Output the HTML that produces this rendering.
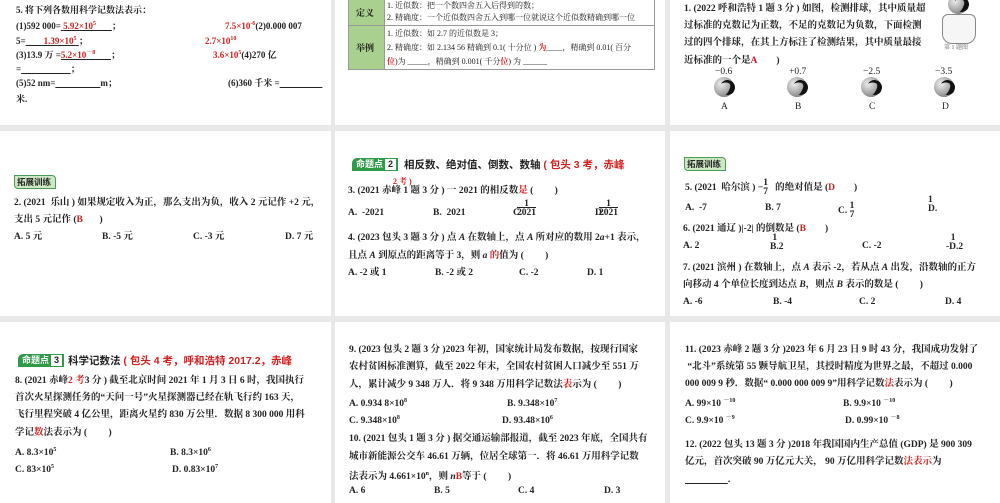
<!DOCTYPE html>
<html><head><meta charset="utf-8"><style>
body{margin:0;width:1000px;height:503px;background:#e8e8e8;position:relative;overflow:hidden;font-family:"Liberation Serif","Noto Serif CJK SC",serif;font-weight:bold;font-size:9.5px;color:#222}
.p{position:absolute;background:#fff}
.t{position:absolute;white-space:nowrap;line-height:12px}
.s9{font-size:9px}
.r{color:#d42020;font-weight:bold}
.sm{font-size:6px;vertical-align:super}
.bd{position:absolute;height:13px;background:#2f9a48;color:#fff;font-size:9px;line-height:13px;padding:0 2px 0 4px;border-radius:5px 0 0 0;font-family:"Liberation Sans","Noto Sans CJK SC",sans-serif}
.bd i{font-style:normal;display:inline-block;background:#fff;color:#222;width:11px;text-align:center;margin-left:2px;line-height:11px}
.tz{position:absolute;height:12px;background:#cfe8c4;border:1px solid #4b9a55;border-radius:0 4px 0 4px;font-size:8.5px;line-height:12px;padding:0 4px 0 2px;font-family:"Liberation Sans","Noto Sans CJK SC",sans-serif}
.ball{position:absolute;width:20px;height:20px;border-radius:50%;background:radial-gradient(circle at 35% 35%,#eee,#999 60%,#555)}
.ball:after{content:"";position:absolute;left:6px;top:3px;width:10px;height:12px;border-radius:50%;border-right:5px solid #111;border-top:3px solid #111;transform:rotate(20deg)}
.cell{position:absolute;font-size:8px;white-space:nowrap;font-weight:normal}
</style></head><body>
<div class="p" style="left:0;top:0;width:331px;height:125px"></div>
<div class="p" style="left:335px;top:0;width:330px;height:125px"></div>
<div class="p" style="left:670px;top:0;width:330px;height:125px"></div>
<div class="p" style="left:0;top:131px;width:331px;height:185px"></div>
<div class="p" style="left:335px;top:131px;width:330px;height:185px"></div>
<div class="p" style="left:670px;top:131px;width:330px;height:185px"></div>
<div class="p" style="left:0;top:322px;width:331px;height:181px"></div>
<div class="p" style="left:335px;top:322px;width:330px;height:181px"></div>
<div class="p" style="left:670px;top:322px;width:330px;height:181px"></div>

<!-- row1 col1 -->
<div class="t s9" style="left:16px;top:4px">5. 将下列各数用科学记数法表示：</div>
<div class="t s9" style="left:16px;top:18px">(1)592 000=<u>&nbsp;<span class="r">5.92×10<span class="sm">5</span></span>&nbsp;&nbsp;&nbsp;&nbsp;&nbsp;&nbsp;&nbsp;</u>；</div>
<div class="t s9" style="left:225px;top:18px"><span class="r">7.5×10<span class="sm">-6</span></span>(2)0.000 007</div>
<div class="t s9" style="left:16px;top:33px">5=<u>&nbsp;&nbsp;&nbsp;&nbsp;&nbsp;&nbsp;&nbsp;&nbsp;<span class="r">1.39×10<span class="sm">5</span></span>&nbsp;</u>；</div>
<div class="t s9" style="left:205px;top:33px"><span class="r">2.7×10<span class="sm">10</span></span></div>
<div class="t s9" style="left:16px;top:47px">(3)13.9 万 =<u><span class="r">5.2×10<span class="sm">－8</span></span>&nbsp;&nbsp;&nbsp;&nbsp;&nbsp;&nbsp;&nbsp;</u>；</div>
<div class="t s9" style="left:213px;top:47px"><span class="r">3.6×10<span class="sm">5</span></span>(4)270 亿</div>
<div class="t s9" style="left:16px;top:63px">=<u>&nbsp;&nbsp;&nbsp;&nbsp;&nbsp;&nbsp;&nbsp;&nbsp;&nbsp;&nbsp;&nbsp;&nbsp;&nbsp;&nbsp;&nbsp;&nbsp;&nbsp;&nbsp;&nbsp;&nbsp;&nbsp;&nbsp;</u>；</div>
<div class="t s9" style="left:16px;top:77px">(5)52 nm=<u>&nbsp;&nbsp;&nbsp;&nbsp;&nbsp;&nbsp;&nbsp;&nbsp;&nbsp;&nbsp;&nbsp;&nbsp;&nbsp;&nbsp;&nbsp;&nbsp;&nbsp;&nbsp;&nbsp;&nbsp;</u>m；</div>
<div class="t s9" style="left:228px;top:77px">(6)360 千米 =<u>&nbsp;&nbsp;&nbsp;&nbsp;&nbsp;&nbsp;&nbsp;&nbsp;&nbsp;&nbsp;&nbsp;&nbsp;&nbsp;&nbsp;&nbsp;&nbsp;&nbsp;&nbsp;&nbsp;</u></div>
<div class="t s9" style="left:16px;top:93px">米.</div>

<!-- row1 col2 table -->
<div style="position:absolute;left:348px;top:-2px;width:305px;height:70px;border:1px solid #999"></div>
<div style="position:absolute;left:349px;top:-1px;width:35px;height:70px;background:#a9d08e;border-right:1px solid #999"></div>
<div style="position:absolute;left:349px;top:25px;width:305px;height:1px;background:#999"></div>
<div class="t" style="left:356px;top:7px;font-size:9px">定义</div>
<div class="t" style="left:356px;top:42px;font-size:9px">举例</div>
<div class="cell" style="left:387px;top:0px;line-height:12px">1. 近似数：把一个数四舍五入后得到的数；<br>2. 精确度：一个近似数四舍五入到哪一位就说这个近似数精确到哪一位</div>
<div class="cell" style="left:387px;top:27px;line-height:14px">1. 近似数：如 2.7 的近似数是 3；<br>2. 精确度：如 2.134 56 精确到 0.1( 十分位 ) <span class="r">为</span>____，精确到 0.01( 百分<br><span class="r">位</span>)为 _____，精确到 0.001( 千分<span class="r">位</span>) 为 ______</div>

<!-- row1 col3 -->
<div class="t" style="left:684px;top:3px;font-size:9.5px">1. (2022 呼和浩特 1 题 3 分 ) 如图，检测排球，其中质量超</div>
<div class="t" style="left:684px;top:20px;font-size:9.5px">过标准的克数记为正数，不足的克数记为负数，下面检测</div>
<div class="t" style="left:684px;top:37px;font-size:9.5px">过的四个排球，在其上方标注了检测结果，其中质量最接</div>
<div class="t" style="left:684px;top:55px;font-size:9.5px">近标准的一个是<span class="r">A</span>&nbsp;&nbsp;&nbsp;&nbsp;&nbsp;&nbsp;&nbsp;&nbsp;)</div>
<div class="ball" style="left:948px;top:-6px"></div>
<div style="position:absolute;left:942px;top:14px;width:32px;height:28px;border:1px solid #888;border-radius:6px 6px 10px 10px;background:#f6f6f6"></div>
<div class="t" style="left:944px;top:42px;font-size:6px;color:#666;font-weight:normal">第 1 题图</div>
<div class="t" style="left:715px;top:66px;font-weight:normal">−0.6</div>
<div class="t" style="left:789px;top:66px;font-weight:normal">+0.7</div>
<div class="t" style="left:863px;top:66px;font-weight:normal">−2.5</div>
<div class="t" style="left:935px;top:66px;font-weight:normal">−3.5</div>
<div class="ball" style="left:714px;top:77px"></div>
<div class="ball" style="left:787px;top:77px"></div>
<div class="ball" style="left:861px;top:77px"></div>
<div class="ball" style="left:934px;top:77px"></div>
<div class="t" style="left:721px;top:101px;font-weight:normal">A</div>
<div class="t" style="left:795px;top:101px;font-weight:normal">B</div>
<div class="t" style="left:869px;top:101px;font-weight:normal">C</div>
<div class="t" style="left:942px;top:101px;font-weight:normal">D</div>

<!-- row2 col1 -->
<div class="tz" style="left:14px;top:175px">拓展训练</div>
<div class="t" style="left:14px;top:197px">2. (2021&nbsp; 乐山 ) 如果规定收入为正，那么支出为负，收入 2 元记作 +2 元，</div>
<div class="t" style="left:14px;top:214px">支出 5 元记作 (<span class="r">B</span>&nbsp;&nbsp;&nbsp;&nbsp;&nbsp;&nbsp;&nbsp;)</div>
<div class="t" style="left:14px;top:231px">A. 5 元</div>
<div class="t" style="left:102px;top:231px">B. -5 元</div>
<div class="t" style="left:193px;top:231px">C. -3 元</div>
<div class="t" style="left:285px;top:231px">D. 7 元</div>

<!-- row2 col2 -->
<div class="bd" style="left:352px;top:158px">命题点<i>2</i></div>
<div class="t" style="left:404px;top:159px;font-size:10.5px;font-family:'Liberation Sans','Noto Sans CJK SC',sans-serif">相反数、绝对值、倒数、数轴 <span class="r">( 包头 3 考，赤峰</span></div>
<div class="t r" style="left:393px;top:176px;font-size:8px">2 考 )</div>
<div class="t" style="left:348px;top:185px">3. (2021 赤峰 1 题 3 分 ) 一 2021 的相反数<span class="r">是</span> (&nbsp;&nbsp;&nbsp;&nbsp;&nbsp;&nbsp;&nbsp;&nbsp;&nbsp;)</div>
<div class="t" style="left:348px;top:207px">A.&nbsp; -2021</div>
<div class="t" style="left:433px;top:207px">B.&nbsp; 2021</div>
<div class="t" style="left:513px;top:207px">C.</div>
<div class="t" style="left:517px;top:200px;line-height:9px;text-align:center">1<br><span style="border-top:1px solid #222">2021</span></div>
<div class="t" style="left:595px;top:207px">D.</div>
<div class="t" style="left:599px;top:200px;line-height:9px;text-align:center">1<br><span style="border-top:1px solid #222">2021</span></div>
<div class="t" style="left:348px;top:232px">4. (2023 包头 3 题 3 分 ) 点 <i>A</i> 在数轴上，点 <i>A</i> 所对应的数用 2<i>a</i>+1 表示，</div>
<div class="t" style="left:348px;top:250px">且点 <i>A</i> 到原点的距离等于 3，则 <i>a</i> <span class="r">的</span>值为 (&nbsp;&nbsp;&nbsp;&nbsp;&nbsp;&nbsp;&nbsp;&nbsp;&nbsp;)</div>
<div class="t" style="left:348px;top:267px">A. -2 或 1</div>
<div class="t" style="left:435px;top:267px">B. -2 或 2</div>
<div class="t" style="left:519px;top:267px">C. -2</div>
<div class="t" style="left:587px;top:267px">D. 1</div>

<!-- row2 col3 -->
<div class="tz" style="left:684px;top:157px">拓展训练</div>
<div class="t" style="left:685px;top:179px">5. (2021&nbsp; 哈尔滨 ) −<span style="display:inline-block;vertical-align:middle;line-height:9px;text-align:center">1<br>7</span>&nbsp;&nbsp; 的绝对值是 (<span class="r">D</span>&nbsp;&nbsp;&nbsp;&nbsp;&nbsp;&nbsp;&nbsp;&nbsp;)</div>
<div class="t" style="left:685px;top:202px">A.&nbsp; -7</div>
<div class="t" style="left:765px;top:202px">B. 7</div>
<div class="t" style="left:838px;top:202px">C. <span style="display:inline-block;vertical-align:middle;line-height:9px">1<br>7</span></div>
<div class="t" style="left:928px;top:196px;line-height:9px">1<br>D.</div>
<div class="t" style="left:683px;top:223px">6. (2021 通辽 )|-2| 的倒数是 (<span class="r">B</span>&nbsp;&nbsp;&nbsp;&nbsp;&nbsp;&nbsp;&nbsp;&nbsp;)</div>
<div class="t" style="left:683px;top:240px">A. 2</div>
<div class="t" style="left:770px;top:234px;line-height:9px">&nbsp;1<br>B.2</div>
<div class="t" style="left:862px;top:240px">C. -2</div>
<div class="t" style="left:946px;top:234px;line-height:9px">&nbsp;&nbsp;1<br>-D.2</div>
<div class="t" style="left:683px;top:262px">7. (2021 滨州 ) 在数轴上，点 <i>A</i> 表示 -2，若从点 <i>A</i> 出发，沿数轴的正方</div>
<div class="t" style="left:683px;top:279px">向移动 4 个单位长度到达点 <i>B</i>，则点 <i>B</i> 表示的数是 (&nbsp;&nbsp;&nbsp;&nbsp;&nbsp;&nbsp;&nbsp;&nbsp;&nbsp;)</div>
<div class="t" style="left:683px;top:296px">A. -6</div>
<div class="t" style="left:773px;top:296px">B. -4</div>
<div class="t" style="left:859px;top:296px">C. 2</div>
<div class="t" style="left:945px;top:296px">D. 4</div>

<!-- row3 col1 -->
<div class="bd" style="left:18px;top:354px">命题点<i>3</i></div>
<div class="t" style="left:68px;top:355px;font-size:10.5px;font-family:'Liberation Sans','Noto Sans CJK SC',sans-serif">科学记数法 <span class="r">( 包头 4 考，呼和浩特 2017.2，赤峰</span></div>
<div class="t" style="left:15px;top:375px">8. (2021 赤峰<span class="r">2 考</span>3 分 ) 截至北京时间 2021 年 1 月 3 日 6 时，我国执行</div>
<div class="t" style="left:15px;top:392px">首次火星探测任务的“天问一号”火星探测器已经在轨飞行约 163 天，</div>
<div class="t" style="left:15px;top:409px">飞行里程突破 4 亿公里，距离火星约 830 万公里．数据 8 300 000 用科</div>
<div class="t" style="left:15px;top:427px">学记<span class="r">数</span>法表示为 (&nbsp;&nbsp;&nbsp;&nbsp;&nbsp;&nbsp;&nbsp;&nbsp;&nbsp;)</div>
<div class="t" style="left:15px;top:444px">A. 8.3×10<span class="sm">5</span></div>
<div class="t" style="left:170px;top:444px">B. 8.3×10<span class="sm">6</span></div>
<div class="t" style="left:15px;top:461px">C. 83×10<span class="sm">5</span></div>
<div class="t" style="left:172px;top:461px">D. 0.83×10<span class="sm">7</span></div>

<!-- row3 col2 -->
<div class="t" style="left:349px;top:344px">9. (2023 包头 2 题 3 分 )2023 年初，国家统计局发布数据，按现行国家</div>
<div class="t" style="left:349px;top:361px">农村贫困标准测算，截至 2022 年末，全国农村贫困人口减少至 551 万</div>
<div class="t" style="left:349px;top:379px">人，累计减少 9 348 万人．将 9 348 万用科学记数法<span class="r">表</span>示为 (&nbsp;&nbsp;&nbsp;&nbsp;&nbsp;&nbsp;&nbsp;&nbsp;&nbsp;)</div>
<div class="t" style="left:349px;top:395px">A. 0.934 8×10<span class="sm">8</span></div>
<div class="t" style="left:507px;top:395px">B. 9.348×10<span class="sm">7</span></div>
<div class="t" style="left:349px;top:412px">C. 9.348×10<span class="sm">8</span></div>
<div class="t" style="left:502px;top:412px">D. 93.48×10<span class="sm">6</span></div>
<div class="t" style="left:349px;top:433px">10. (2021 包头 1 题 3 分 ) 据交通运输部报道，截至 2023 年底，全国共有</div>
<div class="t" style="left:349px;top:451px">城市新能源公交车 46.61 万辆，位居全球第一．将 46.61 万用科学记数</div>
<div class="t" style="left:349px;top:468px">法表示为 4.661×10<span class="sm">n</span>，则 <i>n</i><span class="r">B</span>等于 (&nbsp;&nbsp;&nbsp;&nbsp;&nbsp;&nbsp;&nbsp;&nbsp;&nbsp;)</div>
<div class="t" style="left:349px;top:485px">A. 6</div>
<div class="t" style="left:434px;top:485px">B. 5</div>
<div class="t" style="left:518px;top:485px">C. 4</div>
<div class="t" style="left:604px;top:485px">D. 3</div>

<!-- row3 col3 -->
<div class="t" style="left:685px;top:344px">11. (2023 赤峰 2 题 3 分 )2023 年 6 月 23 日 9 时 43 分，我国成功发射了</div>
<div class="t" style="left:685px;top:361px">&nbsp;“北斗”系统第 55 颗导航卫星，其授时精度为世界之最，不超过 0.000</div>
<div class="t" style="left:685px;top:378px">000 009 9 秒．数据“ 0.000 000 009 9”用科学记数<span class="r">法</span>表示为 (&nbsp;&nbsp;&nbsp;&nbsp;&nbsp;&nbsp;&nbsp;&nbsp;&nbsp;)</div>
<div class="t" style="left:685px;top:395px">A. 99×10 <span class="sm">－10</span></div>
<div class="t" style="left:843px;top:395px">B. 9.9×10 <span class="sm">－10</span></div>
<div class="t" style="left:685px;top:412px">C. 9.9×10 <span class="sm">－9</span></div>
<div class="t" style="left:845px;top:412px">D. 0.99×10 <span class="sm">－8</span></div>
<div class="t" style="left:685px;top:439px">12. (2022 包头 13 题 3 分 )2018 年我国国内生产总值 (GDP) 是 900 309</div>
<div class="t" style="left:685px;top:456px">亿元，首次突破 90 万亿元大关，&nbsp;90 万亿用科学记数<span class="r">法表示</span>为</div>
<div class="t" style="left:685px;top:474px"><u>&nbsp;&nbsp;&nbsp;&nbsp;&nbsp;&nbsp;&nbsp;&nbsp;&nbsp;&nbsp;&nbsp;&nbsp;&nbsp;&nbsp;&nbsp;&nbsp;&nbsp;&nbsp;</u>．</div>
</body></html>
